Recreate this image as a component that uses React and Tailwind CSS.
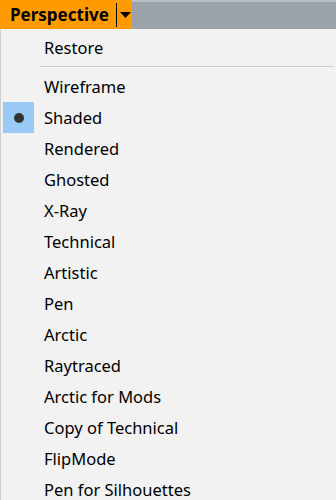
import React from "react";

const items = [
  "Wireframe",
  "Shaded",
  "Rendered",
  "Ghosted",
  "X-Ray",
  "Technical",
  "Artistic",
  "Pen",
  "Arctic",
  "Raytraced",
  "Arctic for Mods",
  "Copy of Technical",
  "FlipMode",
  "Pen for Silhouettes",
];

export default function App() {
  return (
    <div
      className="w-[336px] h-[500px] overflow-hidden bg-[#f2f2f2] text-black"
      style={{ fontFamily: '"Noto Sans", "Open Sans", sans-serif' }}
    >
      <div className="flex h-[29px]">
        <div className="w-[132px] bg-[#ff9a00] flex items-center">
          <span className="pl-[10px] text-[17px] font-bold leading-none w-[117px]">Perspective</span>
          <div className="w-[1px] h-[24px] bg-black"></div>
          <svg width="12" height="8" viewBox="0 0 12 8" className="ml-[3px]">
            <polygon points="0,1 11,1 5.5,7" fill="#000" />
          </svg>
        </div>
        <div className="flex-1 bg-[#9ba3aa] border-t-2 border-[#b9bdcb]"></div>
      </div>
      <div className="border-l border-[#cfcfcf] pt-[3px] h-[471px]">
        <div className="h-[31px] flex items-center text-[16.5px]">
          <span className="pl-[43px] pt-[2px]">Restore</span>
        </div>
        <div className="mt-[3px] mb-[4px] ml-[39px] mr-[2px] h-[1px] bg-[#cccccc]"></div>
        {items.map((t) => (
          <div key={t} className="h-[31px] flex items-center text-[16.5px] relative">
            {t === "Shaded" && (
              <div className="absolute left-[2px] top-0 w-[31px] h-[31px] bg-[#99cbf6] flex items-center justify-center">
                <div className="w-[10px] h-[10px] rounded-full bg-[#333333]"></div>
              </div>
            )}
            <span className="pl-[43px] pt-[2px]">{t}</span>
          </div>
        ))}
      </div>
    </div>
  );
}
